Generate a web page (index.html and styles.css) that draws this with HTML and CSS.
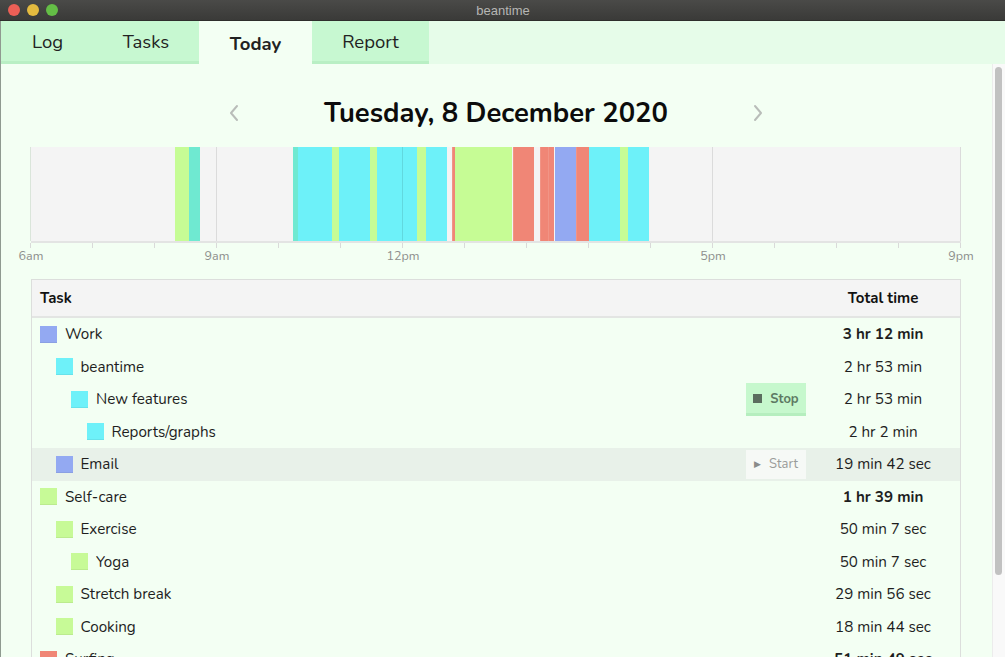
FILE: index.html
```html
<!DOCTYPE html>
<html lang="en">
<head>
<meta charset="utf-8">
<title>beantime</title>
<link rel="stylesheet" href="styles.css">
</head>
<body>
<div class="window">
  <div class="titlebar">
    <div class="lights">
      <span class="light red"></span>
      <span class="light yellow"></span>
      <span class="light green"></span>
    </div>
    <div class="title">beantime</div>
  </div>
  <nav class="tabs">
    <div class="tab tab-log">Log</div>
    <div class="tab tab-tasks">Tasks</div>
    <div class="tab tab-today active">Today</div>
    <div class="tab tab-report">Report</div>
    <div class="tab-fill"></div>
  </nav>
  <div class="body">
    <main class="main">
      <div class="heading">
        <svg class="chev" width="12" height="18" viewBox="0 0 12 18"><polyline points="9,2 3,9 9,16" fill="none" stroke="#b9bdb9" stroke-width="2" stroke-linecap="round" stroke-linejoin="round"/></svg>
        <h1 class="date">Tuesday, 8 December 2020</h1>
        <svg class="chev" width="12" height="18" viewBox="0 0 12 18"><polyline points="3,2 9,9 3,16" fill="none" stroke="#b9bdb9" stroke-width="2" stroke-linecap="round" stroke-linejoin="round"/></svg>
      </div>

      <div class="timeline">
        <div class="chart">
          <div class="seg green" style="left:15.50%;width:1.51%"></div>
          <div class="seg teal" style="left:17.01%;width:1.18%"></div>
          <div class="seg teal" style="left:28.20%;width:0.54%"></div>
          <div class="seg cyan" style="left:28.74%;width:3.66%"></div>
          <div class="seg green" style="left:32.40%;width:0.75%"></div>
          <div class="seg cyan" style="left:33.15%;width:3.34%"></div>
          <div class="seg green" style="left:36.49%;width:0.75%"></div>
          <div class="seg cyan" style="left:37.24%;width:4.31%"></div>
          <div class="seg green" style="left:41.55%;width:0.97%"></div>
          <div class="seg cyan" style="left:42.52%;width:2.26%"></div>
          <div class="seg red" style="left:45.32%;width:0.32%"></div>
          <div class="seg green" style="left:45.64%;width:4.41%"></div>
          <div class="seg green" style="left:50.05%;width:1.72%"></div>
          <div class="seg red" style="left:51.78%;width:2.26%"></div>
          <div class="seg red" style="left:54.68%;width:0.86%"></div>
          <div class="seg red" style="left:55.54%;width:0.75%"></div>
          <div class="seg blue" style="left:56.30%;width:2.26%"></div>
          <div class="seg red" style="left:58.56%;width:1.40%"></div>
          <div class="seg cyan" style="left:59.96%;width:3.34%"></div>
          <div class="seg green" style="left:63.30%;width:0.86%"></div>
          <div class="seg cyan" style="left:64.16%;width:2.26%"></div>

          <div class="grid" style="left:0%"></div>
          <div class="grid" style="left:20%"></div>
          <div class="grid" style="left:40%"></div>
          <div class="grid" style="left:73.333%"></div>
          <div class="grid" style="left:100%"></div>
        </div>
        <div class="axis">
          <span class="tick" style="left:0%"></span>
          <span class="tick" style="left:6.667%"></span>
          <span class="tick" style="left:13.333%"></span>
          <span class="tick" style="left:20%"></span>
          <span class="tick" style="left:26.667%"></span>
          <span class="tick" style="left:33.333%"></span>
          <span class="tick" style="left:40%"></span>
          <span class="tick" style="left:46.667%"></span>
          <span class="tick" style="left:53.333%"></span>
          <span class="tick" style="left:60%"></span>
          <span class="tick" style="left:66.667%"></span>
          <span class="tick" style="left:73.333%"></span>
          <span class="tick" style="left:80%"></span>
          <span class="tick" style="left:86.667%"></span>
          <span class="tick" style="left:93.333%"></span>
          <span class="tick" style="left:100%"></span>
          <span class="label" style="left:0%">6am</span>
          <span class="label" style="left:20%">9am</span>
          <span class="label" style="left:40%">12pm</span>
          <span class="label" style="left:73.333%">5pm</span>
          <span class="label" style="left:100%">9pm</span>
        </div>
      </div>

      <div class="table">
        <div class="row head">
          <div class="cell task">Task</div>
          <div class="cell action"></div>
          <div class="cell time">Total time</div>
        </div>
        <div class="row">
          <div class="cell task l0"><span class="sw c-blue"></span>Work</div>
          <div class="cell action"></div>
          <div class="cell time bold">3 hr 12 min</div>
        </div>
        <div class="row">
          <div class="cell task l1"><span class="sw c-cyan"></span>beantime</div>
          <div class="cell action"></div>
          <div class="cell time">2 hr 53 min</div>
        </div>
        <div class="row">
          <div class="cell task l2"><span class="sw c-cyan"></span>New features</div>
          <div class="cell action"><button class="btn stop"><span class="sq"></span>Stop</button></div>
          <div class="cell time">2 hr 53 min</div>
        </div>
        <div class="row">
          <div class="cell task l3"><span class="sw c-cyan"></span>Reports/graphs</div>
          <div class="cell action"></div>
          <div class="cell time">2 hr 2 min</div>
        </div>
        <div class="row hover">
          <div class="cell task l1"><span class="sw c-blue"></span>Email</div>
          <div class="cell action"><button class="btn start"><span class="tri">&#9654;</span>Start</button></div>
          <div class="cell time">19 min 42 sec</div>
        </div>
        <div class="row">
          <div class="cell task l0"><span class="sw c-green"></span>Self-care</div>
          <div class="cell action"></div>
          <div class="cell time bold">1 hr 39 min</div>
        </div>
        <div class="row">
          <div class="cell task l1"><span class="sw c-green"></span>Exercise</div>
          <div class="cell action"></div>
          <div class="cell time">50 min 7 sec</div>
        </div>
        <div class="row">
          <div class="cell task l2"><span class="sw c-green"></span>Yoga</div>
          <div class="cell action"></div>
          <div class="cell time">50 min 7 sec</div>
        </div>
        <div class="row">
          <div class="cell task l1"><span class="sw c-green"></span>Stretch break</div>
          <div class="cell action"></div>
          <div class="cell time">29 min 56 sec</div>
        </div>
        <div class="row">
          <div class="cell task l1"><span class="sw c-green"></span>Cooking</div>
          <div class="cell action"></div>
          <div class="cell time">18 min 44 sec</div>
        </div>
        <div class="row">
          <div class="cell task l0"><span class="sw c-red"></span>Surfing</div>
          <div class="cell action"></div>
          <div class="cell time bold">51 min 49 sec</div>
        </div>
      </div>
    </main>
    <div class="scrollbar"><div class="thumb"></div></div>
  </div>
</div>
</body>
</html>
```

FILE: styles.css
```css
* { box-sizing: border-box; }
html, body {
  margin: 0;
  padding: 0;
  width: 1005px;
  height: 657px;
  overflow: hidden;
}
body {
  font-family: "Nunito", "Lato", "Noto Sans", sans-serif;
  color: #1e1e1e;
  background: #f3fff3;
}
.window {
  display: flex;
  flex-direction: column;
  height: 657px;
}
.titlebar {
  height: 21px;
  flex: none;
  background: linear-gradient(#4a4a48, #3a3a38);
  display: flex;
  align-items: center;
  justify-content: center;
  position: relative;
  border-bottom: 1px solid #2e2e2c;
}
.lights {
  position: absolute;
  left: 8px;
  top: 4px;
  display: flex;
  gap: 7px;
}
.light {
  width: 12px;
  height: 12px;
  border-radius: 50%;
  display: block;
}
.light.red { background: #ec5f56; }
.light.yellow { background: #e4bb3f; }
.light.green { background: #64be46; }
.title {
  color: #b6b6b4;
  font-family: "Liberation Sans", "Lato", sans-serif;
  font-size: 13px;
  padding-left: 1px;
}

.tabs {
  height: 43px;
  flex: none;
  display: flex;
  background: #e6fce9;
  border-left: 1px solid #8f9a90;
}
.tab {
  height: 43px;
  display: flex;
  align-items: center;
  justify-content: center;
  font-size: 18.5px;
  color: #222;
  background: #c7f8d1;
  border-bottom: 3px solid #b9efc4;
  padding-top: 2px;
}
.tab-log { width: 92px; padding-left: 1px; }
.tab-tasks { width: 106px; }
.tab-today { width: 113px; }
.tab-report { width: 117px; }
.tab.active {
  background: #f3fff3;
  border-bottom: none;
  font-weight: 700;
  padding-top: 2px;
}
.tab-fill { flex: 1; }

.body {
  flex: 1;
  display: flex;
  min-height: 0;
  border-left: 1px solid #8f9a90;
}
.main {
  flex: 1;
  min-width: 0;
  padding: 29px 31px 0 30px;
  overflow: hidden;
}
.scrollbar {
  width: 13px;
  flex: none;
  background: #f9f9f9;
  border-left: 1px solid #ececec;
  padding: 3px 2px 0 2px;
}
.thumb {
  width: 7px;
  height: 508px;
  border-radius: 4px;
  background: #c1c1c1;
}

.heading {
  width: 536px;
  margin: 0 auto;
  height: 40px;
  display: flex;
  align-items: center;
  justify-content: space-between;
}
.chev { display: block; }
.date {
  margin: 0;
  font-size: 27.4px;
  font-weight: 700;
  color: #0c0c0c;
}

.timeline {
  margin-top: 14px;
}
.chart {
  position: relative;
  height: 96px;
  background: #f4f4f4;
  border-bottom: 2px solid #e3e4e3;
}
.seg {
  position: absolute;
  top: 0;
  bottom: 0;
}
.seg.green { background: #c6fc95; }
.seg.teal { background: #6fe9d1; }
.seg.cyan { background: #6df1f9; }
.seg.red { background: #f08676; box-shadow: inset 1px 0 rgba(255,255,255,0.12); }
.seg.blue { background: #93a9f2; }
.grid {
  position: absolute;
  top: 0;
  bottom: 0;
  width: 1px;
  margin-left: -1px;
  background: rgba(0, 0, 0, 0.1);
}
.axis {
  position: relative;
  height: 36px;
}
.tick {
  position: absolute;
  top: 0;
  width: 1px;
  height: 5px;
  margin-left: -1px;
  background: #d9dad9;
}
.label {
  position: absolute;
  top: 6px;
  transform: translateX(-50%);
  font-size: 12.5px;
  color: #8d8f8d;
  line-height: 14px;
}

.table {
  border: 1px solid #dcdedc;
  border-bottom: none;
}
.row {
  display: flex;
  align-items: center;
  height: 32.5px;
  font-size: 15.2px;
}
.row.head {
  height: 38px;
  background: #f4f4f4;
  border-bottom: 2px solid #e3e5e3;
  font-weight: 700;
  color: #111;
  font-size: 15px;
}
.row.hover { background: #e8f1e9; }
.cell.task {
  flex: 1;
  display: flex;
  align-items: center;
  padding-left: 8px;
  min-width: 0;
}
.cell.task.l1 { padding-left: 23.5px; }
.cell.task.l2 { padding-left: 39px; }
.cell.task.l3 { padding-left: 54.5px; }
.cell.action {
  width: 60px;
  flex: none;
  align-self: stretch;
  display: flex;
  align-items: center;
}
.cell.time {
  width: 154px;
  flex: none;
  text-align: center;
}
.bold { font-weight: 700; }
.sw {
  width: 17px;
  height: 17px;
  flex: none;
  margin-right: 8px;
  box-shadow: inset 0 -1px rgba(0,0,0,0.06);
}
.c-blue { background: #93a9f2; }
.c-cyan { background: #6ef1f9; }
.c-green { background: #c7fa97; }
.c-red { background: #f08676; }

.btn {
  font-family: inherit;
  border: none;
  width: 60px;
  display: flex;
  align-items: center;
  justify-content: center;
  font-size: 13px;
  padding: 0;
  cursor: pointer;
}
.btn.stop {
  height: 33px;
  background: #c6f8cd;
  border-bottom: 3px solid #b5eebe;
  color: #5d7a63;
  font-weight: 700;
  padding-top: 2px;
}
.sq {
  width: 9px;
  height: 9px;
  background: #5a6d5e;
  margin-right: 8px;
}
.btn.start {
  height: 29px;
  background: #f6f9f6;
  color: #9a9c9a;
}
.tri {
  font-size: 9px;
  margin-right: 8px;
  color: #8a8c8a;
}
```
